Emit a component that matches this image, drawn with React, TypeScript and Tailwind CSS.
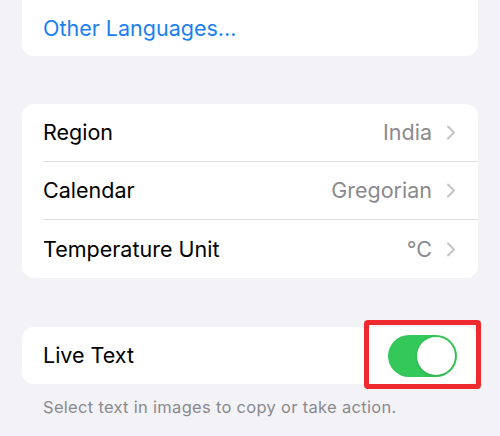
const Chevron = () => (
  <svg width="10" height="15" viewBox="0 0 10 15" fill="none" className="shrink-0">
    <path d="M2 1.5 L8 7.5 L2 13.5" stroke="#c4c4c7" strokeWidth="2" strokeLinecap="round" strokeLinejoin="round" />
  </svg>
);

type Row = { label: string; value: string };

const rows: Row[] = [
  { label: "Region", value: "India" },
  { label: "Calendar", value: "Gregorian" },
  { label: "Temperature Unit", value: "°C" },
];

export default function App() {
  return (
    <div
      className="flex h-[436px] w-[500px] flex-col overflow-hidden bg-[#f2f2f7] px-[22px] text-black"
      style={{ fontFamily: "Inter, 'Liberation Sans', sans-serif" }}
    >
      <div className="flex h-[56px] shrink-0 items-center rounded-b-[12px] bg-white pl-[21px]">
        <span className="text-[21.5px] text-[#1a7ff0]">Other Languages...</span>
      </div>

      <div className="mt-[48px] shrink-0 rounded-[12px] bg-white">
        {rows.map((r, i) => (
          <div key={r.label} className="pl-[21px]">
            <div
              className={
                "flex h-[58px] items-center pr-[22px] " +
                (i < rows.length - 1 ? "border-b border-[#dedee1]" : "")
              }
            >
              <span className="flex-1 text-[21.5px]">{r.label}</span>
              <span className="mr-[14px] text-[21.5px] text-[#8a8a8e]">{r.value}</span>
              <Chevron />
            </div>
          </div>
        ))}
      </div>

      <div className="relative mt-[49px] flex h-[57px] shrink-0 items-center rounded-[12px] bg-white pl-[21px] pr-[21px]">
        <span className="flex-1 text-[21.5px]">Live Text</span>
        <div className="flex h-[42px] w-[69px] items-center justify-end rounded-full bg-[#34c759] pr-[2px]">
          <div className="h-[38px] w-[38px] rounded-full bg-white shadow-[0_1px_3px_rgba(0,0,0,0.15)]" />
        </div>
        <div className="absolute left-[342px] top-[-7px] h-[69px] w-[117px] rounded-[4px] border-[5px] border-[#ef2a2f]" />
      </div>

      <p className="mt-[11px] pl-[21px] text-[16.5px] tracking-[0.3px] text-[#8a8a8e]">
        Select text in images to copy or take action.
      </p>
    </div>
  );
}
